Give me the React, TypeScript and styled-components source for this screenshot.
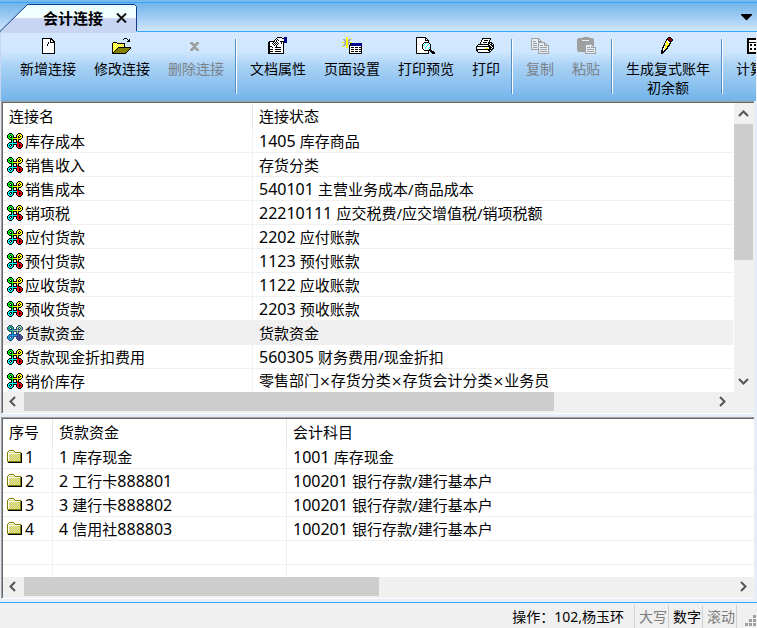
import React from "react";
import styled, { createGlobalStyle } from "styled-components";

const GlobalStyle = createGlobalStyle`
  * { box-sizing: border-box; }
  body {
    margin: 0;
    font-family: "Noto Sans", "Noto Sans CJK SC", sans-serif;
    font-size: 15px;
    color: #000;
    background: #f0f0f0;
  }
  button {
    font: inherit;
    color: inherit;
    border: 0;
    margin: 0;
    padding: 0;
    background: transparent;
  }
`;

/* ---------- pixel icons ---------- */

const palette: Record<string, string> = {
  k: "#000000",
  w: "#ffffff",
  g: "#00ff00",
  y: "#ffff00",
  c: "#00ffff",
  r: "#ff0000",
  o: "#808000",
  n: "#000090",
  a: "#a0a0a0",
  m: "#800000",
  e: "#e4eef8",
  l: "#ffff90",
  s: "#c8c8c8",
  t: "#e8e830",
};

const fadedPalette: Record<string, string> = {
  ...palette,
  k: "#2c4a88",
  g: "#20b070",
  y: "#98c880",
  c: "#10a0e0",
  r: "#504080",
};

function PixelIcon({ rows, faded = false }: { rows: string[]; faded?: boolean }) {
  const colors = faded ? fadedPalette : palette;
  const width = Math.max(...rows.map((r) => r.length));
  const runs: React.ReactNode[] = [];
  rows.forEach((row, y) => {
    let x = 0;
    while (x < row.length) {
      const ch = row[x];
      let end = x + 1;
      while (end < row.length && row[end] === ch) end++;
      if (colors[ch]) {
        runs.push(<rect key={`${x}-${y}`} x={x} y={y} width={end - x} height={1} fill={colors[ch]} />);
      }
      x = end;
    }
  });
  return (
    <svg width={width} height={rows.length} viewBox={`0 0 ${width} ${rows.length}`} shapeRendering="crispEdges" aria-hidden="true">
      {runs}
    </svg>
  );
}

const cloverIcon = [
  "..kkk......kkk..",
  ".kgggk....kyyyk.",
  "kggkggk..kyykyyk",
  "kgk.kgk..kyk.kyk",
  "kggkkgkkkkykkyyk",
  ".kggggyyyyyyyyk.",
  "..kkkgkkkkykkk..",
  "....kgk..kyk....",
  "....kck..krk....",
  "..kkkckkkkrkkk..",
  ".kccccccccrrrrk.",
  "kcckkckkkkrrkrrk",
  "kck.kck..krrkkrk",
  "kcckcck..krrkrrk",
  ".kccck....krrrk.",
  "..kkk......kkk..",
];

const folderIcon = [
  "..ooooo.........",
  ".owwwwwo........",
  "owstststoooooo..",
  "owwwwwwwwwwwwok.",
  "owtstststststok.",
  "owstststststsok.",
  "owtstststststok.",
  "owstststststsok.",
  "owtstststststok.",
  "owstststststsok.",
  "owtstststststok.",
  "ooooooooooooook.",
  ".kkkkkkkkkkkkkk.",
];

const newIcon = [
  "kkkkkkkkkk...",
  "kwwwwwwwkkk..",
  "kwwwwwwwkwkk.",
  "kwwwwwwwkwwkk",
  "kwwwwwkwkkkkk",
  "kwwwwwkwwwwwk",
  "kwwwwkwwwwwwk",
  "kwwwwkwwwwwwk",
  "kwwwwwwwwwwwk",
  "kwwwwwwwwwwwk",
  "kwwwwwwwwwwwk",
  "kwwwwwwwwwwwk",
  "kwwwwwwwwwwwk",
  "kwwwwwwwwwwwk",
  "kwwwwwwwwwwwk",
  "kkkkkkkkkkkkk",
];

const editIcon = [
  "............kkk.....",
  "...........k...k.k..",
  "................kk..",
  "...............kkk..",
  ".kkkk...............",
  "kylylkkkkkkkk.......",
  "klylylylylylk.......",
  "kylylylylylyk.......",
  "klylylylylylk.......",
  "kylylykkkkkkkkkkkkk.",
  "klylykooooooooooook.",
  "kylykooooooooooook..",
  "klykooooooooooook...",
  "kykooooooooooook....",
  "kkooooooooooook.....",
  "kkkkkkkkkkkkkk......",
];

const deleteIcon = [
  ".............",
  ".............",
  "aaa...aaa....",
  "aaaa.aaaa....",
  ".aaaaaaa.....",
  "..aaaaa......",
  "...aaa.......",
  "..aaaaa......",
  ".aaaaaaa.....",
  "aaaa.aaaa....",
  "aaa...aaa....",
];

const propertiesIcon = [
  ".........kkkkk..nnn.",
  "........kwwwwwkknnn.",
  ".......kwkwwwwwwnnn.",
  "......kwkwkwwwwwnnn.",
  ".kkkkkkwkwwwkkkknnn.",
  "kkwwwkwkwkwwwkwknnn.",
  "kkwwkwkwkwkwwkwk....",
  "kkwwwkwkwkwwwwwk....",
  "kkwwwwkwkwwwwwwk....",
  "kkkkwwwwkwwwwwwk....",
  "kkwwkwwkkkkkkwwk....",
  "kkwwwwwwwwwwwwwk....",
  "kkkkkwwkkkkkkwwk....",
  "kkwwwwwwwwwwwwwk....",
  "kkkkkwwkkkkkkwwk....",
  "kkwwwwwwwwwwwwwk....",
  "kkkkkkkkkkkkkkkk....",
];

const pageSetupIcon = [
  "....yy..............",
  "....yy...y..........",
  ".aa.yy.aa...........",
  "..aayyaa............",
  "...ayya.............",
  "yyaayyaayy..........",
  "...ayya.knnnnnnnnnnn",
  "..aayyaaknnnnnnnnnnn",
  ".aa.yy.kknnnnnnnnnnn",
  ".y..yy.kwwwwwwwwwwwk",
  "....yy.kwkkkwkkkwkkk",
  ".......kwwwwwwwwwwwk",
  ".......kwkkkwkkkwkkk",
  ".......kwwwwwwwwwwwk",
  ".......kwkkkwkkkwkkk",
  ".......kwwwwwwwwwwwk",
  ".......kkkkkkkkkkkkk",
];

const previewIcon = [
  "kkkkkkkkkk..........",
  "kwwwwwwwwkk.........",
  "kwwwwwwwwkwk........",
  "kwwwwwwwwkkkk.......",
  "kwwwwwwwwwwwk.......",
  "kwwwwwwwkkkkk.......",
  "kwwwwwwkwcwwwk......",
  "kwwwwwkwcwwwcwk.....",
  "kwwwwwkcwwwcwwk.....",
  "kwwwwwkwwwcwwwk.....",
  "kwwwwwkwwcwwwck.....",
  "kwwwwwkwwcwwcwk.....",
  "kwwwwwwkwwwwwkk.....",
  "kwwwwwwwkkkkkkkk....",
  "kwwwwwwwwwwwk.kkkk..",
  "kwwwwwwwwwwwk..kkkk.",
  "kkkkkkkkkkkkk...kkk.",
];

const printIcon = [
  "......kkkkkkkkk.....",
  "......kwwwwwwwk.....",
  ".....kwwkkkkwk......",
  ".....kwwwwwwwk......",
  "....kwwkkkkwkkkk....",
  "....kwwwwwwwkkwkk...",
  "..kkkkkkkkkkkwkkwk..",
  ".kwwwwwwwwwwkkwkkk..",
  "kkkkkkkkkkkkkkkwkk..",
  "kwwwwwwwwwwwwkkkwk..",
  "kwwwwwwwwyyywkkwkk..",
  "kkkkkkkkkkkkkkkkk...",
  "kkwwwwwwwwwwkkwk....",
  ".kwwwwwwwwwwwkk.....",
  "..kkkkkkkkkkkk......",
  "....................",
];

const copyIcon = [
  "aaaaaaaa...........",
  "aeeeeeeaa..........",
  "aeeeeeeaea.........",
  "aeaaaeeaaaa........",
  "aeeeeeeaaaaaaa.....",
  "aeaaaaeaeeeeeaa....",
  "aeeeeeeaeeeeeaea...",
  "aeaaaaeaeaaaeaaaaa.",
  "aeeeeeeaeeeeeeeeea.",
  "aeaaaaeaeaaaaaaaea.",
  "aeeeeeeaeeeeeeeeea.",
  "aaaaaaaaeaaaaaaaea.",
  ".......aeeeeeeeeea.",
  ".......aeaaaaaaaea.",
  ".......aeeeeeeeeea.",
  ".......aaaaaaaaaaa.",
];

const pasteIcon = [
  "......aaaaaa.......",
  ".aaaaaaaaaaaaaaa...",
  "aaaaaaaaaaaaaaaaa..",
  "aaaaaeeeeeeeaaaaa..",
  "aaaaaaaaaaaaaaaaa..",
  "aaaaaaaaaaaaaaaaa..",
  "aaaaaaaaaaaaaaaaa..",
  "aaaaaaaaaaaaaaaaa..",
  "aaaaaaaaaeeeeeeaa..",
  "aaaaaaaaaeeeeeaea..",
  "aaaaaaaaaeaaaeaaaaa",
  "aaaaaaaaaeeeeeeeeea",
  "aaaaaaaaaeaaaaaaaea",
  "aaaaaaaaaeeeeeeeeea",
  ".aaaaaaaaeaaaaaaaea",
  "........aeeeeeeeeea",
  "........aaaaaaaaaaa",
];

const pencilIcon = [
  ".......kkk....",
  "......kmmmk...",
  ".....kkmmmmk..",
  ".....kwkmmmk..",
  "....kywwkkk...",
  "....kyywwk....",
  "...kwyyykk....",
  "...kwwyyk.....",
  "..kkyyykk.....",
  "..kwyykk......",
  ".kkwyyk.......",
  ".kwyykk.......",
  ".kwwkk........",
  "kkwkk.........",
  "kkkk..........",
  "kkk...........",
  "kk............",
];

const calcIcon = [
  "....................",
  "kkkkkkkkkkkkkkkkkkk.",
  "kkkkkkkkkkkkkkkkkkk.",
  "kkwwwwwwwwwwwwwwwkk.",
  "kkwwwwwwwwwwwwwwwkk.",
  "kkkkkkkkkkkkkkkkkkk.",
  "kkwwwwwwwwwwwwwwwkk.",
  "kkwkkwwkkwwkkwwkwkk.",
  "kkwkkwwkkwwkkwwkwkk.",
  "kkwwwwwwwwwwwwwwwkk.",
  "kkwwwwwwwwwwwwwwwkk.",
  "kkwkkwwkkwwkkwwkwkk.",
  "kkwkkwwkkwwkkwwkwkk.",
  "kkwwwwwwwwwwwwwwwkk.",
  "kkwwwwwwwwwwwwwwwkk.",
  "kkkkkkkkkkkkkkkkkkk.",
  "kkkkkkkkkkkkkkkkkkk.",
];

const gripIcon = [
  "........aaa",
  "........aaa",
  "........aaa",
  "...........",
  "....aaa.aaa",
  "....aaa.aaa",
  "....aaa.aaa",
  "...........",
  "aaa.aaa.aaa",
  "aaa.aaa.aaa",
  "aaa.aaa.aaa",
];

/* ---------- frame ---------- */

const Window = styled.div`
  display: flex;
  flex-direction: column;
  height: 100vh;
  overflow: hidden;
  border-top: 2px solid #74b8ee;
`;

const TabBar = styled.nav`
  display: flex;
  justify-content: space-between;
  flex: none;
  height: 30px;
  border-top: 1px solid #33a7f8;
  background: linear-gradient(#72b4ea, #a6cff4 55%, #d4e8fc);
  box-shadow: inset 0 -1px #33a7f8;
`;

const Tab = styled.div`
  position: relative;
  display: flex;
  align-items: center;
  gap: 13px;
  width: 137px;
  padding-left: 43px;
  font-weight: 700;
  line-height: 20px;
  white-space: nowrap;
`;

const TabShape = styled.svg`
  position: absolute;
  inset: 1px 0 0 0;
`;

const TabTitle = styled.span`
  position: relative;
`;

const CloseButton = styled.button`
  position: relative;
  display: flex;
`;

const TabMenuButton = styled.button`
  display: flex;
  align-items: center;
  padding-right: 5px;
`;

const Toolbar = styled.div`
  display: flex;
  align-items: stretch;
  flex: none;
  height: 69px;
  margin-right: 1px;
  padding-left: 10px;
  overflow: hidden;
  border-left: 1px solid #c6d4f0;
  background: linear-gradient(#d4e8fd, #cfe7ff 28%, #a9d1f5 50%, #72b4ea);
  font-size: 14px;
  line-height: 19px;
`;

const Tool = styled.button<{ $muted?: boolean }>`
  display: flex;
  flex-direction: column;
  align-items: center;
  flex: none;
  gap: 5px;
  padding: 5px 9px 0;
  white-space: pre;
  color: ${(p) => (p.$muted ? "#7c8289" : "#000")};
`;

const ToolIcon = styled.span`
  display: flex;
  align-items: center;
  justify-content: center;
  height: 17px;
`;

const ToolDivider = styled.span`
  flex: none;
  width: 2px;
  margin: 7px 4px 7px 2px;
  border-left: 1px solid #5590c4;
  border-right: 1px solid #fff;
`;

const Workspace = styled.main`
  display: grid;
  grid-template-rows: minmax(0, 313fr) minmax(0, 182fr);
  row-gap: 3px;
  flex: 1;
  min-height: 0;
  padding: 0 3px 3px 1px;
  background: #e6edf7;
`;

const Pane = styled.section`
  display: flex;
  min-height: 0;
  border-top: 1px solid #a0a0a0;
  border-left: 1px solid #a0a0a0;
  border-bottom: 1px solid #fff;
  background: #f0f0f0;
`;

const PaneInner = styled.div`
  display: grid;
  grid-template-columns: minmax(0, 1fr) auto;
  grid-template-rows: minmax(0, 1fr) auto;
  flex: 1;
  min-width: 0;
  border-top: 1px solid #696969;
  border-left: 1px solid #696969;
`;

const ListArea = styled.div`
  overflow: hidden;
  background: #fff;
`;

const ListTable = styled.table`
  width: 100%;
  table-layout: fixed;
  border-collapse: separate;
  border-spacing: 0;
  text-align: left;
  white-space: nowrap;
  line-height: 20px;
`;

const HeadCell = styled.th`
  height: 26px;
  padding: 0 6px;
  font-weight: 400;
  border-right: 1px solid #e5e5e5;
  &:last-child { border-right: 0; }
`;

const Row = styled.tr<{ $selected?: boolean }>`
  background: ${(p) => (p.$selected ? "#f0f0f0" : "#fff")};
`;

const Cell = styled.td`
  height: 24px;
  padding: 0 6px;
  border-right: 1px solid #f0f0f0;
  border-bottom: 1px solid #f0f0f0;
  &:first-child { padding: 0 0 0 4px; }
  &:last-child { border-right: 0; }
`;

const IconLabel = styled.span`
  display: flex;
  align-items: center;
  gap: 2px;
`;

const IconBack = styled.span`
  display: flex;
  background: #fff;
`;

const Latin = styled.span`
  font-size: 16px;
`;

const Times = styled.span`
  font-family: "DejaVu Sans", sans-serif;
  font-size: 14px;
`;

/* ---------- scroll bars ---------- */

const ScrollBar = styled.div<{ $vertical?: boolean }>`
  display: flex;
  flex-direction: ${(p) => (p.$vertical ? "column" : "row")};
  ${(p) => (p.$vertical ? "width: 21px; border-left: 1px solid #fff; padding-right: 1px;" : "height: 21px; padding-bottom: 2px;")}
  background: #f0f0f0;
`;

const ArrowButton = styled.button`
  display: flex;
  align-items: center;
  justify-content: center;
  flex: none;
  width: 21px;
  height: 21px;
  max-width: 100%;
  max-height: 100%;
`;

const Track = styled.div<{ $vertical?: boolean }>`
  display: flex;
  flex-direction: ${(p) => (p.$vertical ? "column" : "row")};
  flex: 1;
  min-width: 0;
  min-height: 0;
`;

const Thumb = styled.div`
  background: #cdcdcd;
`;

const arrowPaths = {
  up: "M1 8 L5.500 3.500 L10 8",
  down: "M1 3 L5.500 7.500 L10 3",
  left: "M7 1 L2.500 5.500 L7 10",
  right: "M3 1 L7.500 5.500 L3 10",
};

function Arrow({ dir, label }: { dir: keyof typeof arrowPaths; label: string }) {
  return (
    <ArrowButton aria-label={label}>
      <svg width="11" height="11" viewBox="0 0 11 11" fill="none" stroke="#555" strokeWidth="2">
        <path d={arrowPaths[dir]} />
      </svg>
    </ArrowButton>
  );
}

function VerticalScroll({ share }: { share: number }) {
  return (
    <ScrollBar $vertical>
      <Arrow dir="up" label="向上滚动" />
      <Track $vertical>
        <Thumb style={{ height: `${share}%` }} />
      </Track>
      <Arrow dir="down" label="向下滚动" />
    </ScrollBar>
  );
}

function HorizontalScroll({ share }: { share: number }) {
  return (
    <ScrollBar>
      <Arrow dir="left" label="向左滚动" />
      <Track>
        <Thumb style={{ width: `${share}%` }} />
      </Track>
      <Arrow dir="right" label="向右滚动" />
    </ScrollBar>
  );
}

/* ---------- status bar ---------- */

const StatusBar = styled.footer`
  display: flex;
  justify-content: flex-end;
  flex: none;
  height: 26px;
  padding-top: 2px;
  border-top: 1px solid #33a7f8;
  background: #f0f0f0;
  font-size: 14px;
  line-height: 23px;
  white-space: pre;
`;

const Operator = styled.span`
  padding-right: 10px;
`;

const StatusCell = styled.span<{ $on?: boolean }>`
  width: 34px;
  padding-left: 4px;
  border-left: 1px solid #d0d0d0;
  color: ${(p) => (p.$on ? "#000" : "#7c7c7c")};
`;

const Grip = styled.span`
  display: flex;
  align-items: flex-end;
  width: 21px;
  padding: 0 1px 2px 8px;
  border-left: 1px solid #d0d0d0;
`;

/* ---------- data ---------- */

const links: [string, string][] = [
  ["库存成本", "1405 库存商品"],
  ["销售收入", "存货分类"],
  ["销售成本", "540101 主营业务成本/商品成本"],
  ["销项税", "22210111 应交税费/应交增值税/销项税额"],
  ["应付货款", "2202 应付账款"],
  ["预付货款", "1123 预付账款"],
  ["应收货款", "1122 应收账款"],
  ["预收货款", "2203 预收账款"],
  ["货款资金", "货款资金"],
  ["货款现金折扣费用", "560305 财务费用/现金折扣"],
  ["销价库存", "零售部门×存货分类×存货会计分类×业务员"],
];

const accounts: [string, string, string][] = [
  ["1", "1 库存现金", "1001 库存现金"],
  ["2", "2 工行卡888801", "100201 银行存款/建行基本户"],
  ["3", "3 建行卡888802", "100201 银行存款/建行基本户"],
  ["4", "4 信用社888803", "100201 银行存款/建行基本户"],
];

type ToolItem = { label: string; icon: string[]; muted?: boolean };

const toolGroups: ToolItem[][] = [
  [
    { label: "新增连接", icon: newIcon },
    { label: "修改连接", icon: editIcon },
    { label: "删除连接", icon: deleteIcon, muted: true },
  ],
  [
    { label: "文档属性", icon: propertiesIcon },
    { label: "页面设置", icon: pageSetupIcon },
    { label: "打印预览", icon: previewIcon },
    { label: "打印", icon: printIcon },
  ],
  [
    { label: "复制", icon: copyIcon, muted: true },
    { label: "粘贴", icon: pasteIcon, muted: true },
  ],
  [{ label: "生成复式账年\n初余额", icon: pencilIcon }],
  [{ label: "计算器", icon: calcIcon }],
];

function Mixed({ text }: { text: string }) {
  return (
    <>
      {text.split(/([0-9]+ ?|×)/).map((part, i) => {
        if (i % 2 === 0) return part;
        return part === "×" ? <Times key={i}>{part}</Times> : <Latin key={i}>{part}</Latin>;
      })}
    </>
  );
}

export default function App() {
  return (
    <>
      <GlobalStyle />
      <Window>
        <TabBar>
          <Tab>
            <TabShape width="137" height="29" viewBox="0 0 137 29" aria-hidden="true">
              <defs>
                <linearGradient id="tabFill" x1="0" y1="0" x2="0" y2="1">
                  <stop offset="0" stopColor="#eaffff" />
                  <stop offset="0.45" stopColor="#f4ffff" />
                  <stop offset="0.5" stopColor="#c6d3f2" />
                  <stop offset="1" stopColor="#c8d6f4" />
                </linearGradient>
              </defs>
              <path d="M0 29 V27.5 L27.5 0.5 H134.500 L136.500 2.500 V29 Z" fill="url(#tabFill)" />
              <path d="M0 27.500 L27.500 0.500 H134.500 L136.500 2.500 V27" fill="none" stroke="#123c8c" />
            </TabShape>
            <TabTitle>会计连接</TabTitle>
            <CloseButton aria-label="关闭">
              <svg width="11" height="10" viewBox="0 0 11 10" stroke="#111" strokeWidth="2">
                <path d="M1 0.500 L10 9.500 M10 0.500 L1 9.500" />
              </svg>
            </CloseButton>
          </Tab>
          <TabMenuButton aria-label="标签列表">
            <svg width="11" height="7" viewBox="0 0 11 7">
              <path d="M0 0 H11 V1 L5.500 6.500 L0 1 Z" fill="#000" />
            </svg>
          </TabMenuButton>
        </TabBar>

        <Toolbar role="toolbar">
          {toolGroups.map((group, g) => (
            <React.Fragment key={g}>
              {g > 0 && <ToolDivider />}
              {group.map((t) => (
                <Tool key={t.label} $muted={t.muted} disabled={t.muted}>
                  <ToolIcon>
                    <PixelIcon rows={t.icon} />
                  </ToolIcon>
                  {t.label}
                </Tool>
              ))}
            </React.Fragment>
          ))}
        </Toolbar>

        <Workspace>
          <Pane>
            <PaneInner>
              <ListArea>
                <ListTable>
                  <colgroup>
                    <col width="250" />
                    <col />
                  </colgroup>
                  <thead>
                    <tr>
                      <HeadCell>连接名</HeadCell>
                      <HeadCell>连接状态</HeadCell>
                    </tr>
                  </thead>
                  <tbody>
                    {links.map(([name, state]) => {
                      const selected = name === "货款资金";
                      return (
                        <Row key={name} $selected={selected}>
                          <Cell>
                            <IconLabel>
                              <IconBack>
                                <PixelIcon rows={cloverIcon} faded={selected} />
                              </IconBack>
                              {name}
                            </IconLabel>
                          </Cell>
                          <Cell>
                            <Mixed text={state} />
                          </Cell>
                        </Row>
                      );
                    })}
                  </tbody>
                </ListTable>
              </ListArea>
              <VerticalScroll share={55} />
              <HorizontalScroll share={77} />
            </PaneInner>
          </Pane>

          <Pane>
            <PaneInner>
              <ListArea>
                <ListTable>
                  <colgroup>
                    <col width="50" />
                    <col width="234" />
                    <col />
                  </colgroup>
                  <thead>
                    <tr>
                      <HeadCell>序号</HeadCell>
                      <HeadCell>货款资金</HeadCell>
                      <HeadCell>会计科目</HeadCell>
                    </tr>
                  </thead>
                  <tbody>
                    {accounts.map(([no, fund, subject]) => (
                      <Row key={no}>
                        <Cell>
                          <IconLabel>
                            <PixelIcon rows={folderIcon} />
                            <Mixed text={no} />
                          </IconLabel>
                        </Cell>
                        <Cell>
                          <Mixed text={fund} />
                        </Cell>
                        <Cell>
                          <Mixed text={subject} />
                        </Cell>
                      </Row>
                    ))}
                    {[0, 1].map((n) => (
                      <Row key={`blank${n}`}>
                        <Cell />
                        <Cell />
                        <Cell />
                      </Row>
                    ))}
                  </tbody>
                </ListTable>
              </ListArea>
              <span />
              <HorizontalScroll share={50} />
            </PaneInner>
          </Pane>
        </Workspace>

        <StatusBar>
          <Operator>操作：102,杨玉环</Operator>
          <StatusCell>大写</StatusCell>
          <StatusCell $on>数字</StatusCell>
          <StatusCell>滚动</StatusCell>
          <Grip>
            <PixelIcon rows={gripIcon} />
          </Grip>
        </StatusBar>
      </Window>
    </>
  );
}
